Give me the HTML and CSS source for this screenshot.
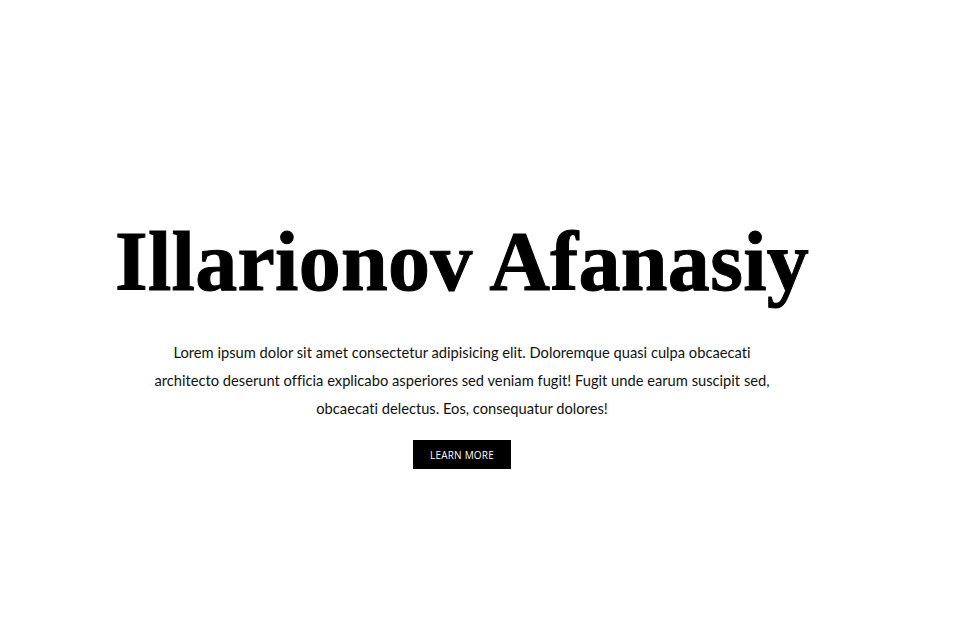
FILE: index.html
```html
<!DOCTYPE html>
<html lang="en">
<head>
<meta charset="utf-8">
<title>Illarionov Afanasiy</title>
<link rel="stylesheet" href="styles.css">
</head>
<body>
<main class="hero">
  <div class="hero__inner">
    <h1 class="hero__title">Illarionov Afanasiy</h1>
    <p class="hero__text">Lorem ipsum dolor sit amet consectetur adipisicing elit. Doloremque quasi culpa obcaecati architecto deserunt officia explicabo asperiores sed veniam fugit! Fugit unde earum suscipit sed, obcaecati delectus. Eos, consequatur dolores!</p>
    <a class="hero__btn" href="#">LEARN MORE</a>
  </div>
</main>
</body>
</html>
```
FILE: styles.css
```css
* { box-sizing: border-box; }
html, body { margin: 0; padding: 0; background: #fff; }
body { width: 960px; height: 640px; overflow: hidden; }
.hero {
  height: 640px;
  display: flex;
  justify-content: center;
  padding-right: 36px;
}
.hero__inner {
  display: flex;
  flex-direction: column;
  align-items: center;
  padding-top: 212px;
}
.hero__title {
  margin: 0;
  font-family: "Liberation Serif", serif;
  font-weight: 700;
  font-size: 84px;
  line-height: 100px;
  letter-spacing: 0.3px;
  -webkit-text-stroke: 1px #000;
  color: #000;
  white-space: nowrap;
}
.hero__text {
  margin: 26px 0 0;
  width: 640px;
  text-align: center;
  font-family: "Lato", sans-serif;
  font-variant-ligatures: none;
  font-size: 14.7px;
  line-height: 28px;
  color: #111;
}
.hero__btn {
  margin-top: 18px;
  display: inline-flex;
  align-items: center;
  justify-content: center;
  width: 98px;
  height: 29px;
  background: #000;
  color: #fff;
  font-family: "Open Sans", sans-serif;
  font-size: 10px;
  text-decoration: none;
  letter-spacing: 0.2px;
}
```
